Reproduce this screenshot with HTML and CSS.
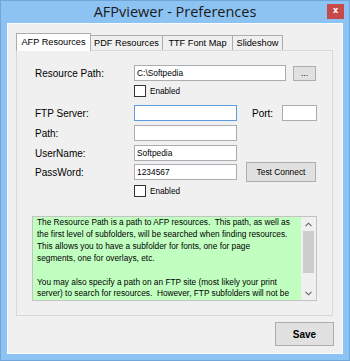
FILE: index.html
```html
<!DOCTYPE html>
<html>
<head>
<meta charset="utf-8">
<link rel="stylesheet" href="styles.css">
</head>
<body>
<div class="window">
  <div class="titlebar">
    <span class="title">AFPviewer - Preferences</span>
    <span class="close">x</span>
  </div>
  <div class="client">
    <div class="tabs">
      <div class="tab tab-afp active">AFP Resources</div>
      <div class="tab tab-pdf">PDF Resources</div>
      <div class="tab tab-ttf">TTF Font Map</div>
      <div class="tab tab-slide">Slideshow</div>
    </div>
    <div class="panel">
      <div class="row row-resource">
        <span class="label">Resource Path:</span>
        <span class="input w-resource">C:\Softpedia</span>
        <span class="btn btn-browse">...</span>
      </div>
      <div class="check-row check-1"><span class="checkbox"></span><span>Enabled</span></div>
      <div class="row row-ftp">
        <span class="label">FTP Server:</span>
        <span class="input w-field focused"></span>
        <span class="label-port">Port:</span>
        <span class="input w-port"></span>
      </div>
      <div class="row row-path">
        <span class="label">Path:</span>
        <span class="input w-field"></span>
      </div>
      <div class="row row-user">
        <span class="label">UserName:</span>
        <span class="input w-field">Softpedia</span>
      </div>
      <div class="row row-pass">
        <span class="label">PassWord:</span>
        <span class="input w-field">1234567</span>
        <span class="btn btn-test">Test Connect</span>
      </div>
      <div class="check-row check-2"><span class="checkbox"></span><span>Enabled</span></div>
      <div class="memo">
        <div class="memo-text">The Resource Path is a path to AFP resources.&nbsp; This path, as well as<br>the first level of subfolders, will be searched when finding resources.<br>This allows you to have a subfolder for fonts, one for page<br>segments, one for overlays, etc.<br><br>You may also specify a path on an FTP site (most likely your print<br>server) to search for resources.&nbsp; However, FTP subfolders will not be</div>
        <div class="scrollbar">
          <svg class="arrow" width="7" height="5" viewBox="0 0 7 5"><path d="M0.5 4.2 L3.5 1.2 L6.5 4.2" fill="none" stroke="#606060" stroke-width="1.1"/></svg>
          <span class="thumb"></span>
          <svg class="arrow arrow-down" width="7" height="5" viewBox="0 0 7 5"><path d="M0.5 0.8 L3.5 3.8 L6.5 0.8" fill="none" stroke="#606060" stroke-width="1.1"/></svg>
        </div>
      </div>
    </div>
    <div class="footer">
      <span class="btn btn-save">Save</span>
    </div>
  </div>
</div>
</body>
</html>
```
FILE: styles.css
```css
* { box-sizing: border-box; }
html, body { margin: 0; padding: 0; }
body {
  width: 350px;
  height: 361px;
  overflow: hidden;
  font-family: "Liberation Sans", Arial, sans-serif;
  font-size: 10px;
  color: #000;
}
.window {
  width: 350px;
  height: 361px;
  background: #8dc3f3;
  border: 1px solid #6fa6da;
}
.titlebar {
  height: 22px;
  display: grid;
  grid-template-columns: 1fr auto 1fr;
  align-items: start;
}
.title {
  grid-column: 2;
  font-family: "Open Sans", "Noto Sans", sans-serif;
  font-size: 14.5px;
  line-height: 22px;
  color: #1a1a1a;
  white-space: nowrap;
}
.close {
  grid-column: 3;
  justify-self: end;
  margin-top: 3px;
  margin-right: 5px;
  width: 17px;
  height: 15px;
  background: #c7494a;
  color: #fff;
  font-family: "DejaVu Sans", sans-serif;
  font-size: 8px;
  font-weight: bold;
  line-height: 14px;
  text-align: center;
}
.client {
  margin-left: 6px;
  width: 336px;
  height: 331px;
  background: #f0f0f0;
  border: 1px solid #f9fbfd;
  padding: 9px 8px 0 8px;
}
.tabs {
  display: flex;
  align-items: flex-end;
  height: 17px;
  position: relative;
  z-index: 1;
}
.tab {
  height: 15px;
  border: 1px solid #acacac;
  border-bottom: none;
  background: #f0f0f0;
  margin-left: -1px;
  text-align: center;
  line-height: 14px;
  white-space: nowrap;
  font-size: 9.2px;
}
.tab.active {
  height: 18px;
  margin-bottom: -1px;
  margin-left: 0;
  background: #fff;
  line-height: 17px;
}
.tab-afp { width: 75px; }
.tab-pdf { width: 72px; margin-left: 0; border-left: none; }
.tab-ttf { width: 71px; }
.tab-slide { width: 51px; }
.panel {
  width: 317px;
  height: 266px;
  border: 1px solid #d9d9d9;
  background: #f0f0f0;
  padding: 14px 0 0 18px;
}
.row {
  display: flex;
  align-items: center;
  height: 16px;
}
.label {
  width: 99px;
  flex: none;
}
.input {
  height: 16px;
  background: #fff;
  border: 1px solid #abadb3;
  padding: 0 0 0 2px;
  line-height: 14px;
  flex: none;
  white-space: nowrap;
  font-size: 8.4px;
}
.input.focused { border-color: #5a9ee0; }
.w-resource { width: 152px; }
.w-field { width: 103px; }
.w-port { width: 35px; }
.label-port { margin-left: 15px; width: 30px; flex: none; }
.btn {
  display: flex;
  align-items: center;
  justify-content: center;
  background: #e1e1e1;
  border: 1px solid #adadad;
  flex: none;
  white-space: nowrap;
}
.btn-browse { width: 23px; height: 15px; margin-left: 7px; font-size: 8.4px; line-height: 8px; }
.btn-test { width: 70px; height: 20px; margin: -2px 0 -2px 9px; font-size: 8.4px; }
.check-row {
  display: flex;
  align-items: center;
  height: 12px;
  margin-left: 99px;
  gap: 4px;
  font-size: 8.2px;
}
.checkbox {
  width: 12px;
  height: 12px;
  border: 1px solid #333;
  background: #fff;
  flex: none;
}
.check-1 { margin-top: 4px; }
.row-ftp { margin-top: 8px; }
.row-path { margin-top: 4px; }
.row-user { margin-top: 4px; }
.row-pass { margin-top: 3px; }
.check-2 { margin-top: 5px; }
.memo {
  margin: 19px 0 0 -3px;
  width: 285px;
  height: 85px;
  border: 1px solid #c3c3c3;
  display: flex;
  background: #c0ffc0;
}
.memo-text {
  flex: 1;
  padding: 0 0 0 4px;
  font-size: 8.3px;
  line-height: 11.9px;
  white-space: nowrap;
  overflow: hidden;
  color: #000;
}
.scrollbar {
  width: 15px;
  flex: none;
  background: #f0f0f0;
  display: flex;
  flex-direction: column;
  align-items: center;
  padding: 5px 0 4px;
}
.arrow { display: block; flex: none; }
.arrow-down { margin-top: auto; }
.thumb {
  width: 11px;
  height: 42px;
  margin-top: 4px;
  background: #cdcdcd;
}
.footer {
  display: flex;
  justify-content: flex-end;
  padding: 6px 0 0 0;
}
.btn-save {
  width: 59px;
  height: 24px;
  font-weight: bold;
  font-size: 10px;
}
```
